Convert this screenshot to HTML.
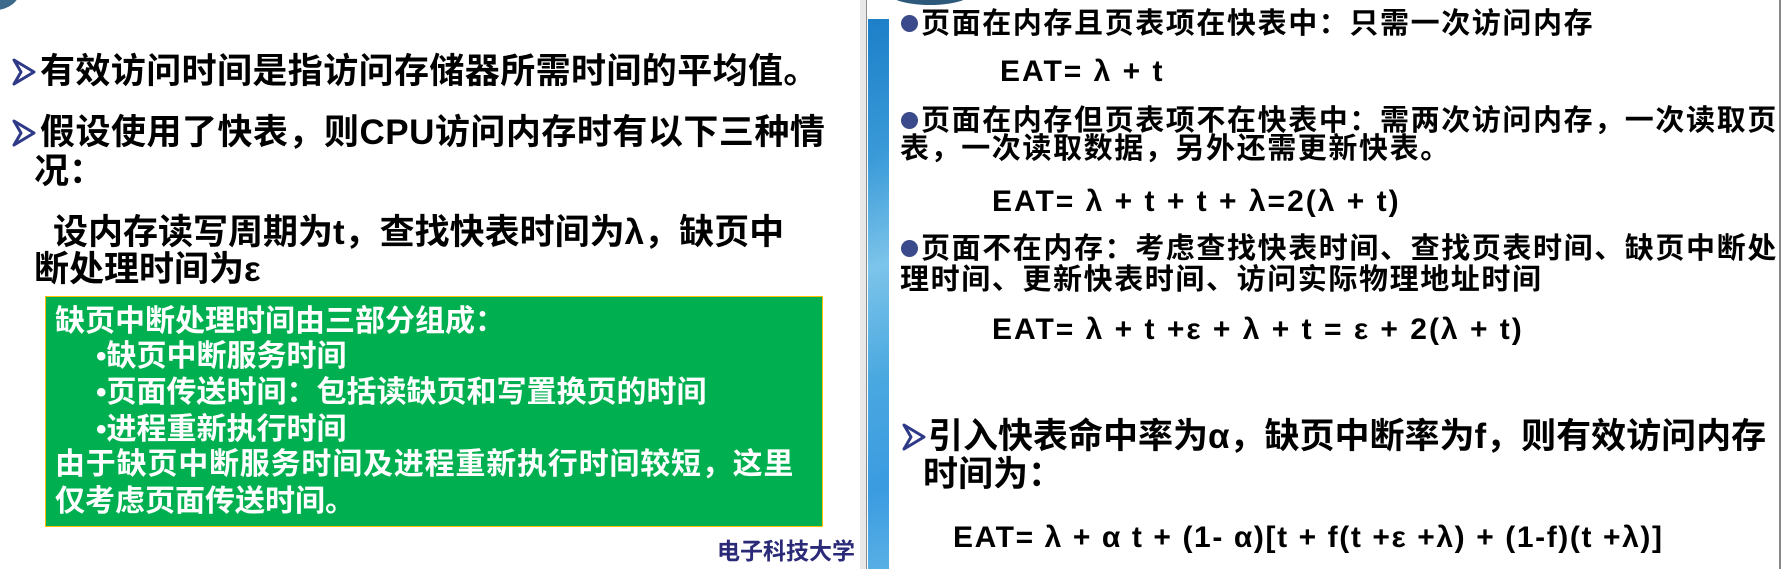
<!DOCTYPE html>
<html><head><meta charset="utf-8"><style>
body{margin:0;width:1789px;height:569px;background:#fff;position:relative;overflow:hidden;font-family:"Liberation Sans","Noto Sans CJK SC",sans-serif;font-weight:bold;color:#000}
.t{position:absolute;white-space:nowrap;line-height:1}
.L{font-size:35px}
.g{font-size:30px;color:#fff}
.R{font-size:29px;letter-spacing:1.6px}
.E{font-size:30px;font-family:"Liberation Sans",sans-serif;letter-spacing:2px}
.arr{position:absolute}
.dot{position:absolute;width:17px;height:17px;border-radius:50%;background:#3b4a8a}
</style></head><body>
<div style="position:absolute;left:-30px;top:-30px;width:50px;height:40px;border-radius:50%;background:#3d6a8a"></div>
<svg class="arr" style="left:12px;top:58px" width="24" height="28" viewBox="0 0 24 28"><path d="M2 2 L22 14 L2 26 L9 14 Z" fill="#fff" stroke="#2e3a87" stroke-width="3" stroke-linejoin="round"/></svg>
<div class="t L" style="left:40px;top:54px;letter-spacing:0.4px">有效访问时间是指访问存储器所需时间的平均值。</div>
<svg class="arr" style="left:12px;top:119px" width="24" height="28" viewBox="0 0 24 28"><path d="M2 2 L22 14 L2 26 L9 14 Z" fill="#fff" stroke="#2e3a87" stroke-width="3" stroke-linejoin="round"/></svg>
<div class="t L" style="left:40px;top:115px;letter-spacing:0.5px">假设使用了快表，则CPU访问内存时有以下三种情</div>
<div class="t L" style="left:34px;top:154px">况：</div>
<div class="t L" style="left:53px;top:215px">设内存读写周期为t，查找快表时间为λ，缺页中</div>
<div class="t L" style="left:34px;top:252px">断处理时间为ε</div>
<div style="position:absolute;left:45px;top:296px;width:776px;height:229px;background:#00b050;border:1px solid #ffc000"></div>
<div class="t g" style="left:55px;top:307px">缺页中断处理时间由三部分组成：</div>
<div class="t g" style="left:96px;top:342px">•缺页中断服务时间</div>
<div class="t g" style="left:96px;top:378px">•页面传送时间：包括读缺页和写置换页的时间</div>
<div class="t g" style="left:96px;top:415px">•进程重新执行时间</div>
<div class="t g" style="left:55px;top:450px;letter-spacing:0.8px">由于缺页中断服务时间及进程重新执行时间较短，这里</div>
<div class="t g" style="left:55px;top:487px">仅考虑页面传送时间。</div>
<div class="t" style="left:717px;top:540px;font-size:23px;color:#2a2a78">电子科技大学</div>
<div style="position:absolute;left:860px;top:0;width:7px;height:569px;background:#e8e8e8;border-right:1px solid #8a8a8a;box-sizing:border-box"></div>
<div style="position:absolute;left:868px;top:19px;width:21px;height:550px;background:linear-gradient(160deg,#1c7fc8 0%,#3a9ad8 25%,#7cc4ea 45%,#4aa8e0 65%,#3a9be0 85%,#5ab0e6 100%)"></div>
<div style="position:absolute;left:885px;top:-25px;width:90px;height:30px;border-radius:50%;background:#2d5a7a"></div>
<div style="position:absolute;left:1779px;top:0;width:2px;height:569px;background:#888"></div>
<div class="dot" style="left:901px;top:15px"></div>
<div class="t R" style="left:921px;top:10px">页面在内存且页表项在快表中：只需一次访问内存</div>
<div class="t E" style="left:1000px;top:57px">EAT= λ + t</div>
<div class="dot" style="left:901px;top:112px"></div>
<div class="t R" style="left:921px;top:107px">页面在内存但页表项不在快表中：需两次访问内存，一次读取页</div>
<div class="t R" style="left:900px;top:135px">表，一次读取数据，另外还需更新快表。</div>
<div class="t E" style="left:992px;top:187px">EAT= λ + t + t + λ=2(λ + t)</div>
<div class="dot" style="left:901px;top:240px"></div>
<div class="t R" style="left:921px;top:235px">页面不在内存：考虑查找快表时间、查找页表时间、缺页中断处</div>
<div class="t R" style="left:900px;top:266px">理时间、更新快表时间、访问实际物理地址时间</div>
<div class="t E" style="left:992px;top:315px">EAT= λ + t +ε + λ + t = ε + 2(λ + t)</div>
<svg class="arr" style="left:902px;top:423px" width="24" height="28" viewBox="0 0 24 28"><path d="M2 2 L22 14 L2 26 L9 14 Z" fill="#fff" stroke="#2e3a87" stroke-width="3" stroke-linejoin="round"/></svg>
<div class="t" style="left:928px;top:419px;font-size:35px">引入快表命中率为α，缺页中断率为f，则有效访问内存</div>
<div class="t" style="left:923px;top:457px;font-size:35px">时间为：</div>
<div class="t E" style="left:953px;top:523px;letter-spacing:1.6px">EAT= λ + α t + (1- α)[t + f(t +ε +λ) + (1-f)(t +λ)]</div>
</body></html>
